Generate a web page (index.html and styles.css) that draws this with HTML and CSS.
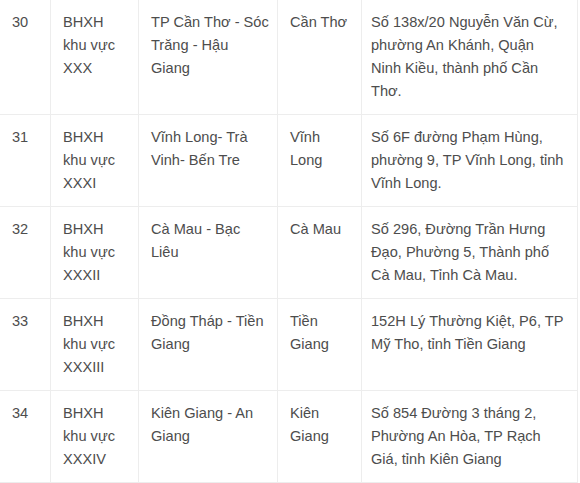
FILE: index.html
```html
<!DOCTYPE html>
<html lang="vi">
<head>
<meta charset="utf-8">
<link rel="stylesheet" href="styles.css">
</head>
<body>
<table class="tbl">
  <colgroup>
    <col class="c1"><col class="c2"><col class="c3"><col class="c4"><col class="c5">
  </colgroup>
  <tbody>
    <tr>
      <td>30</td>
      <td>BHXH khu vực XXX</td>
      <td>TP Cần Thơ - Sóc Trăng - Hậu Giang</td>
      <td>Cần Thơ</td>
      <td>Số 138x/20 Nguyễn Văn Cừ, phường An Khánh, Quận Ninh Kiều, thành phố Cần Thơ.</td>
    </tr>
    <tr>
      <td>31</td>
      <td>BHXH khu vực XXXI</td>
      <td>Vĩnh Long- Trà Vinh- Bến Tre</td>
      <td>Vĩnh Long</td>
      <td>Số 6F đường Phạm Hùng, phường 9, TP Vĩnh Long, tỉnh Vĩnh Long.</td>
    </tr>
    <tr>
      <td>32</td>
      <td>BHXH khu vực XXXII</td>
      <td>Cà Mau - Bạc Liêu</td>
      <td>Cà Mau</td>
      <td>Số 296, Đường Trần Hưng Đạo, Phường 5, Thành phố Cà Mau, Tỉnh Cà Mau.</td>
    </tr>
    <tr>
      <td>33</td>
      <td>BHXH khu vực XXXIII</td>
      <td>Đồng Tháp - Tiền Giang</td>
      <td>Tiền Giang</td>
      <td>152H Lý Thường Kiệt, P6, TP Mỹ Tho, tỉnh Tiền Giang</td>
    </tr>
    <tr>
      <td>34</td>
      <td>BHXH khu vực XXXIV</td>
      <td>Kiên Giang - An Giang</td>
      <td>Kiên Giang</td>
      <td>Số 854 Đường 3 tháng 2, Phường An Hòa, TP Rạch Giá, tỉnh Kiên Giang</td>
    </tr>
  </tbody>
</table>
</body>
</html>
```

FILE: styles.css
```css
html, body {
  margin: 0;
  padding: 0;
  background: #ffffff;
}
.tbl {
  border-collapse: collapse;
  table-layout: fixed;
  width: 578px;
  margin-left: -1px;
  font-family: "Liberation Sans", Arial, sans-serif;
  font-size: 14.6px;
  line-height: 23px;
  color: #4d4d4d;
}
.c1 { width: 51px; }
.c2 { width: 88px; }
.c3 { width: 139px; }
.c4 { width: 84px; }
.c5 { width: 216px; }
.tbl td {
  border: 1px solid #ededed;
  padding: 11px 12px 11px 12px;
  vertical-align: top;
  text-align: left;
}
.tbl td:nth-child(3) {
  padding-right: 8px;
}
.tbl td:last-child {
  padding-left: 9px;
  padding-right: 12px;
}
.tbl tr:first-child td {
  border-top: none;
}
```
